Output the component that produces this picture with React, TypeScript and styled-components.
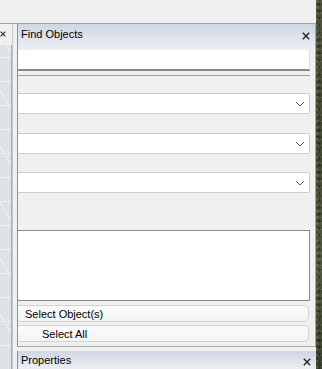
import React from 'react';
import styled, { createGlobalStyle } from 'styled-components';

const GlobalStyle = createGlobalStyle`
  html, body {
    margin: 0;
    padding: 0;
    background: #f0f0f0;
    font-family: "Liberation Sans", Arial, sans-serif;
    font-size: 11px;
    color: #000;
  }
`;

const Screen = styled.div`
  width: 322px;
  height: 369px;
  display: flex;
  overflow: hidden;
`;

const Main = styled.div`
  width: 316px;
  display: flex;
  flex-direction: column;
`;

const Backdrop = styled.div`
  flex: 1;
  background:
    radial-gradient(circle at 30% 20%, rgba(140, 150, 110, 0.35) 0 1px, transparent 2px) 0 0 / 5px 6px,
    radial-gradient(circle at 70% 60%, rgba(20, 25, 15, 0.5) 0 1px, transparent 2px) 0 0 / 4px 7px,
    linear-gradient(#4a5038, #3c4230 40%, #4f5640 70%, #353b2a);
`;

const TopBar = styled.div`
  height: 23px;
  background: #f0f0f0;
  border-bottom: 1px solid #a3a3a3;
`;

const Body = styled.div`
  flex: 1;
  display: flex;
  min-height: 0;
`;

const LeftPane = styled.div`
  width: 12px;
  display: flex;
  flex-direction: column;
  border-right: 1px solid #c4c8cd;
`;

const LeftHead = styled.div`
  height: 21px;
  display: flex;
  align-items: flex-start;
  justify-content: flex-end;
  padding-top: 6px;
  box-sizing: border-box;
  overflow: hidden;
`;

const Canvas = styled.div`
  flex: 1;
  border-right: 1px solid #8fb2dc;
  background:
    repeating-linear-gradient(0deg, transparent 0 23px, #eef1f4 23px 24px),
    repeating-linear-gradient(60deg, transparent 0 27px, #eef1f4 27px 28px),
    #dde2e8;
`;

const Gutter = styled.div`
  width: 4px;
`;

const Docks = styled.div`
  flex: 1;
  display: flex;
  flex-direction: column;
  min-width: 0;
`;

const Panel = styled.div`
  flex: 1;
  display: flex;
  flex-direction: column;
  border-left: 1px solid #8e8e8e;
  border-right: 1px solid #a8a8a8;
  border-bottom: 1px solid #a8a8a8;
`;

const Header = styled.div`
  height: 26px;
  flex-shrink: 0;
  box-sizing: border-box;
  display: flex;
  align-items: flex-start;
  justify-content: space-between;
  padding: 4px 5px 0 3px;
  background: linear-gradient(#cfd6e4, #e4e8ef 70%, #eceef2);
  color: #000;
  font-size: 11px;
  line-height: 13px;
`;

const CloseSlot = styled.span`
  display: flex;
  padding-top: 4px;
`;

const Content = styled.div`
  flex: 1;
  display: flex;
  flex-direction: column;
  padding-right: 5px;
  background: #f0f0f0;
`;

const SearchBox = styled.div`
  height: 19px;
  background: #fff;
  border-right: 1px solid #dcdcdc;
  border-bottom: 2px solid #8a8a8a;
`;

const Rule = styled.div`
  height: 1px;
  margin-top: 4px;
  background: #a0a0a0;
`;

const Combo = styled.div<{ $top: number }>`
  height: 19px;
  margin-top: ${(p) => p.$top}px;
  display: flex;
  align-items: center;
  justify-content: flex-end;
  padding-right: 4px;
  background: #fff;
  border: 1px solid #cdcdcd;
  border-left: none;
  border-radius: 0 2px 2px 0;
`;

const ListBox = styled.div`
  height: 69px;
  margin-top: 37px;
  background: #fff;
  border: 1px solid #868b92;
  border-left: none;
`;

const Button = styled.div<{ $indent: number; $top: number }>`
  height: 15px;
  margin-top: ${(p) => p.$top}px;
  margin-right: 1px;
  display: flex;
  align-items: center;
  padding-left: ${(p) => p.$indent}px;
  background: linear-gradient(#fbfbfb, #f4f4f4);
  border: 1px solid #d2d2d2;
  border-left: none;
  border-radius: 0 5px 5px 0;
  font-size: 11px;
`;

const Spacer = styled.div`
  height: 4px;
`;

const BottomHeader = styled(Header)`
  height: 18px;
  margin-top: 4px;
  border-left: 1px solid #8e8e8e;
  padding-top: 3px;
`;

const CloseIcon = () => (
  <svg width="8" height="8" viewBox="0 0 8 8">
    <path d="M0.8 0.8 L7.2 7.2 M7.2 0.8 L0.8 7.2" stroke="#2b2b2b" strokeWidth="1.5" />
  </svg>
);

const Chevron = () => (
  <svg width="10" height="6" viewBox="0 0 10 6">
    <path d="M1 1 L5 5 L9 1" stroke="#5a5a5a" strokeWidth="1" fill="none" />
  </svg>
);

const App: React.FC = () => {
  return (
    <>
      <GlobalStyle />
      <Screen>
        <Main>
          <TopBar />
          <Body>
            <LeftPane>
              <LeftHead>
                <CloseIcon />
                <span style={{ width: 6, flexShrink: 0 }} />
              </LeftHead>
              <Canvas />
            </LeftPane>
            <Gutter />
            <Docks>
              <Panel>
                <Header>
                  <span>Find Objects</span>
                  <CloseSlot><CloseIcon /></CloseSlot>
                </Header>
                <Content>
                  <SearchBox />
                  <Rule />
                  <Combo $top={17}><Chevron /></Combo>
                  <Combo $top={19}><Chevron /></Combo>
                  <Combo $top={18}><Chevron /></Combo>
                  <ListBox />
                  <Button $indent={7} $top={4}>Select Object(s)</Button>
                  <Button $indent={24} $top={3}>Select All</Button>
                  <Spacer />
                </Content>
              </Panel>
              <BottomHeader>
                <span>Properties</span>
                <CloseSlot><CloseIcon /></CloseSlot>
              </BottomHeader>
            </Docks>
          </Body>
        </Main>
        <Backdrop />
      </Screen>
    </>
  );
};

export default App;
